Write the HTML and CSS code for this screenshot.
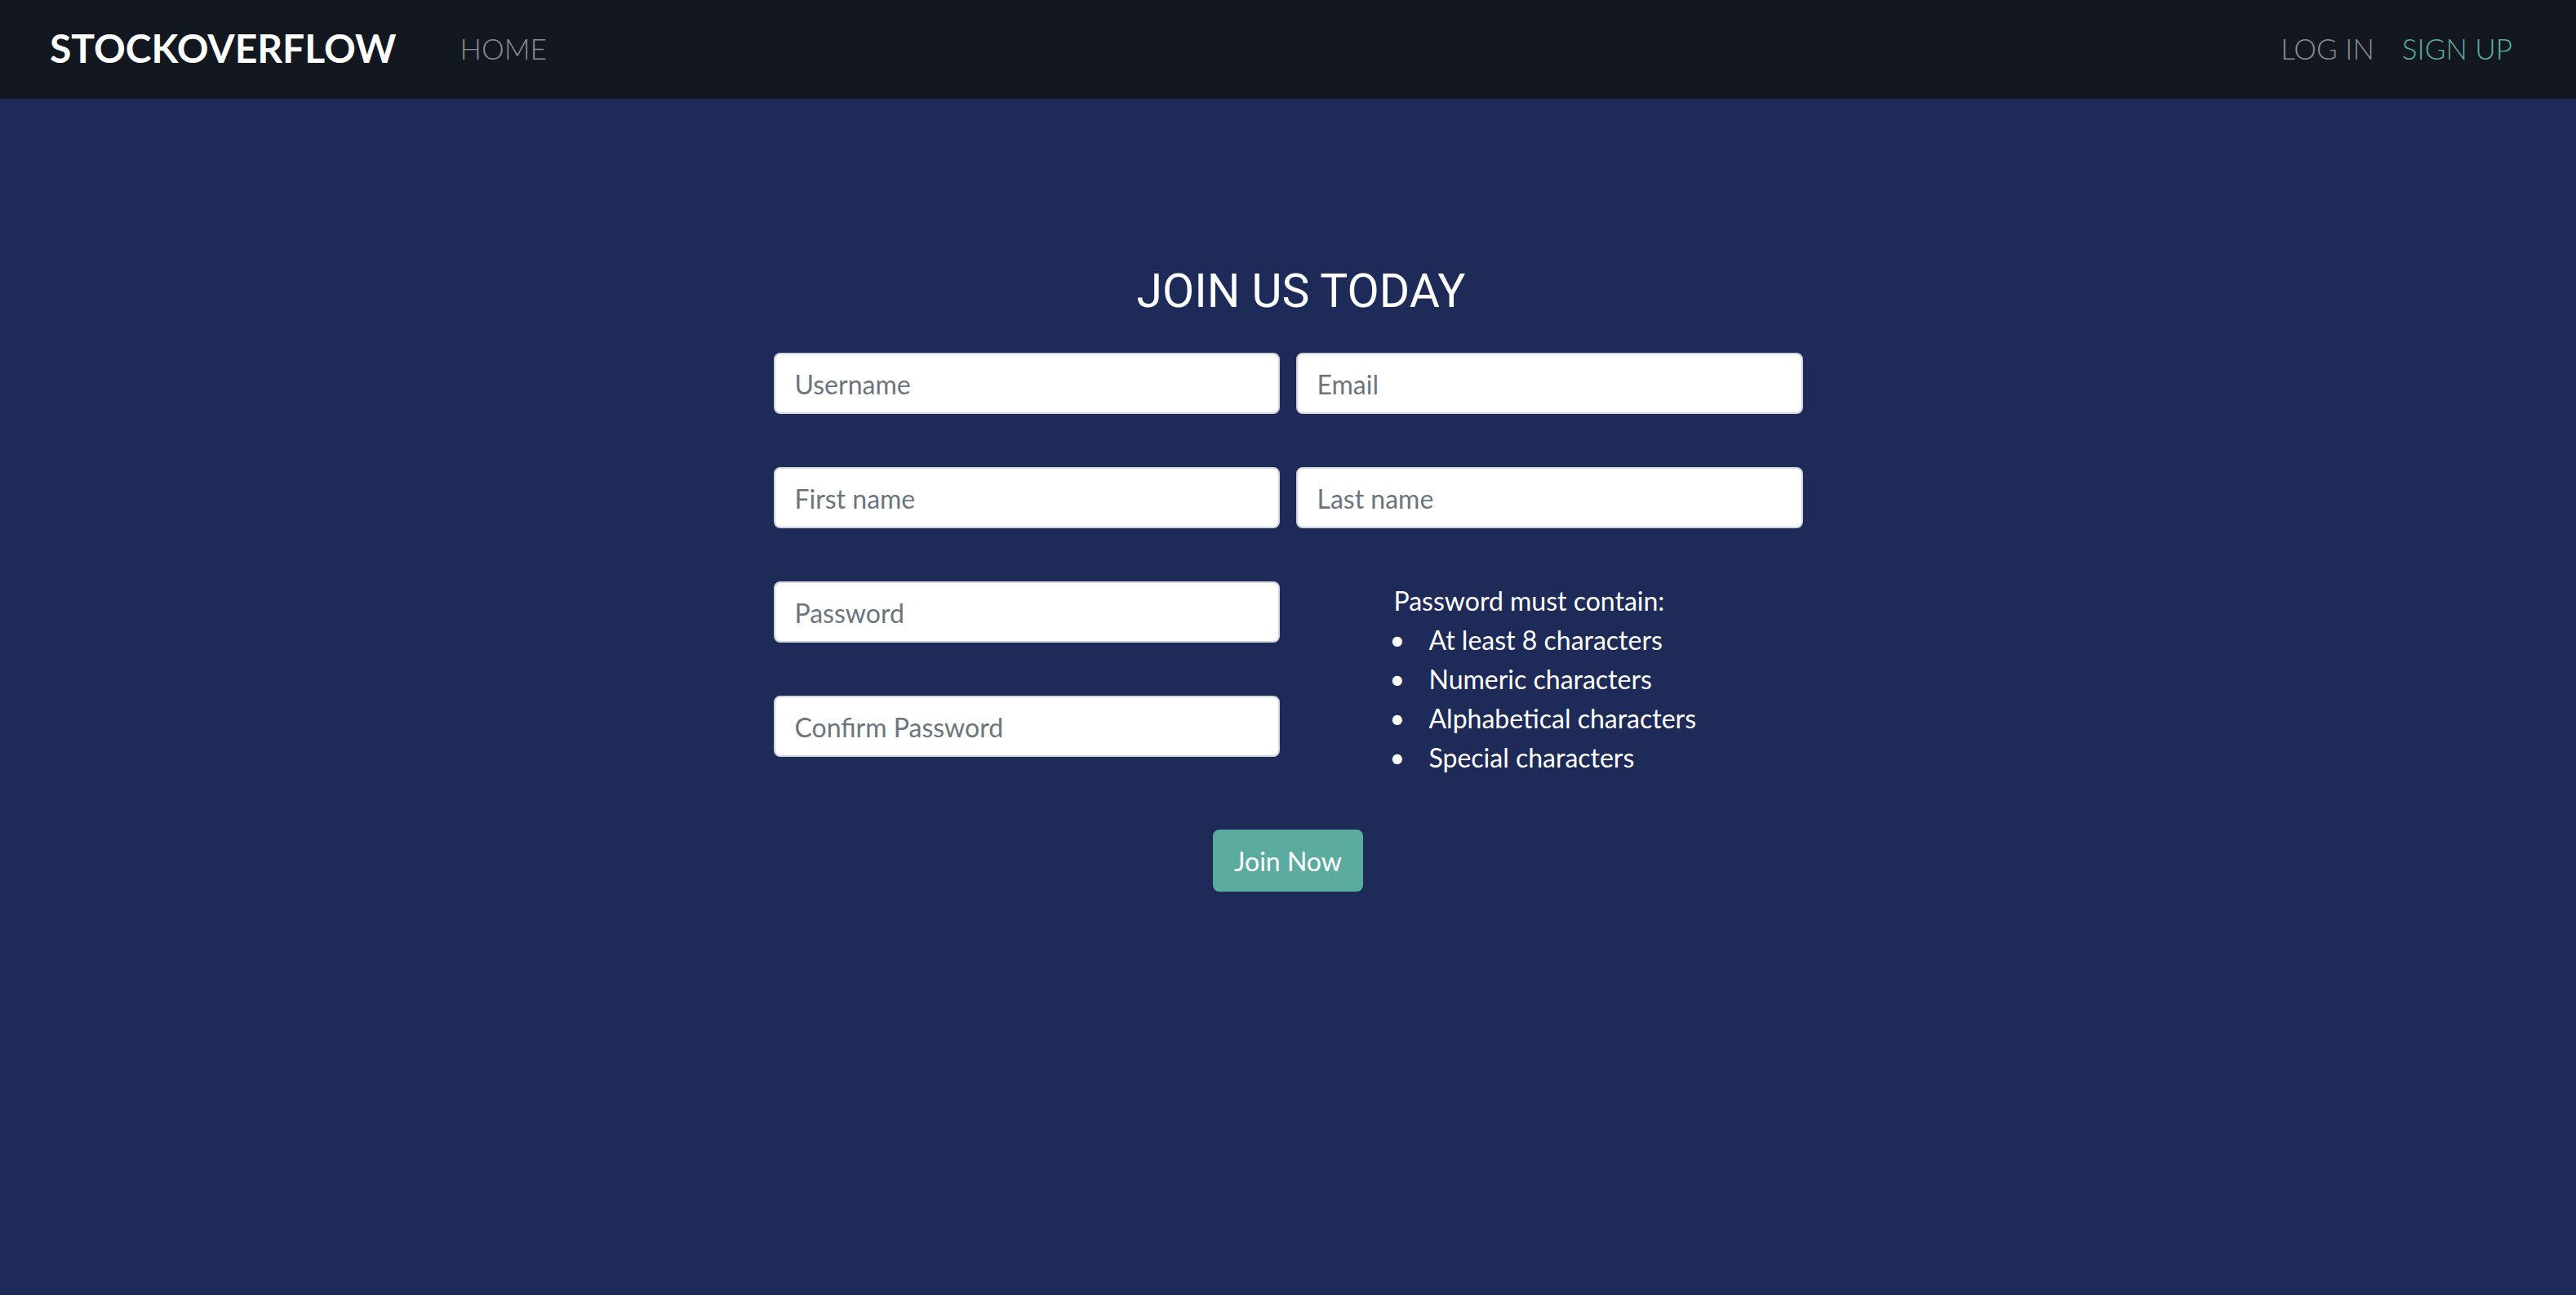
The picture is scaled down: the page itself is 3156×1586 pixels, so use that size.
FILE: index.html
```html
<!DOCTYPE html>
<html lang="en">
<head>
<meta charset="utf-8">
<title>StockOverflow - Sign Up</title>
<link rel="stylesheet" href="styles.css">
</head>
<body>
<nav class="navbar">
  <a class="brand" href="#">STOCKOVERFLOW</a>
  <a class="nav-link" href="#">HOME</a>
  <div class="nav-right">
    <a class="nav-link" href="#">LOG IN</a>
    <a class="nav-link active" href="#">SIGN UP</a>
  </div>
</nav>
<main class="page">
  <form class="signup">
    <h1 class="title">JOIN US TODAY</h1>
    <div class="grid">
      <input class="field" type="text" placeholder="Username">
      <input class="field" type="email" placeholder="Email">
      <input class="field" type="text" placeholder="First name">
      <input class="field" type="text" placeholder="Last name">
      <input class="field" type="password" placeholder="Password">
      <div class="rules">
        <p class="rules-title">Password must contain:</p>
        <ul class="rules-list">
          <li>At least 8 characters</li>
          <li>Numeric characters</li>
          <li>Alphabetical characters</li>
          <li>Special characters</li>
        </ul>
      </div>
      <input class="field" type="password" placeholder="Confirm Password">
    </div>
    <div class="actions">
      <button class="btn" type="button">Join Now</button>
    </div>
  </form>
</main>
</body>
</html>
```
FILE: styles.css
```css
* { box-sizing: border-box; }

html, body {
  margin: 0;
  padding: 0;
}

body {
  background: #1e2b58;
  font-family: Lato, "Liberation Sans", sans-serif;
  min-height: 100vh;
  color: #fff;
}

.navbar {
  height: 121px;
  background: #13171f;
  display: flex;
  align-items: center;
  padding: 0 78px 4px 61px;
}

.brand {
  font-family: Lato, sans-serif;
  font-weight: 700;
  font-size: 48px;
  color: #fff;
  text-decoration: none;
  margin-right: 78px;
}

.nav-link {
  font-family: Lato, sans-serif;
  font-weight: 300;
  font-size: 35px;
  color: #8b8d91;
  text-decoration: none;
}

.nav-link.active {
  color: #5cae9f;
}

.nav-right {
  margin-left: auto;
  display: flex;
  gap: 34px;
}

.page {
  display: flex;
  justify-content: center;
  padding-top: 202px;
}

.signup {
  width: 1261px;
}

.title {
  font-family: Roboto, "Liberation Sans", sans-serif;
  font-weight: 400;
  font-size: 57px;
  line-height: 67px;
  margin: 0 0 42px;
  padding-left: 32px;
  text-align: center;
  color: #fff;
}

.grid {
  display: grid;
  grid-template-columns: 620px 621px;
  grid-template-rows: repeat(4, 75px);
  column-gap: 20px;
  row-gap: 65px;
}

.field {
  height: 75px;
  width: 100%;
  border: 2px solid #ced4da;
  border-radius: 8px;
  padding: 12px 24px 10px;
  font-family: Lato, sans-serif;
  font-size: 32px;
  color: #495057;
  background: #fff;
  outline: none;
}

.field::placeholder {
  color: #6c757d;
  opacity: 1;
}

.rules {
  grid-row: span 2;
  padding-left: 120px;
  font-size: 32px;
  line-height: 48px;
  color: #fff;
}

.rules-title {
  margin: 0;
}

.rules-list {
  margin: 0;
  padding-left: 43px;
  list-style: none;
}

.rules-list li {
  height: 48px;
}

.rules-list li::before {
  content: "\2022";
  display: inline-block;
  width: 48px;
  margin-left: -48px;
}

.actions {
  display: flex;
  justify-content: center;
  margin-top: 89px;
}

.btn {
  height: 76px;
  width: 184px;
  background: #5cab9f;
  color: #fff;
  border: 2px solid #5cab9f;
  border-radius: 8px;
  font-family: Lato, sans-serif;
  font-size: 32px;
  padding: 0;
  cursor: pointer;
}
```
